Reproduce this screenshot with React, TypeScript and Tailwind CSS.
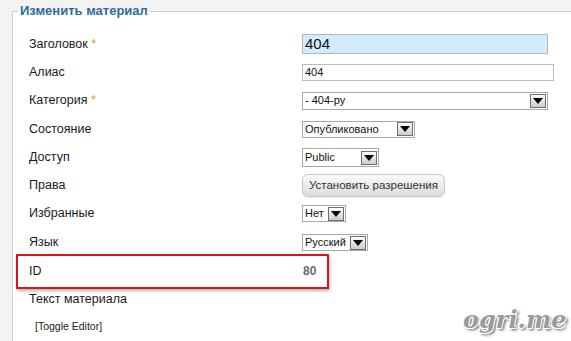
import React from "react"

const font = { fontFamily: '"Liberation Sans", Arial, sans-serif' }

function Arrow() {
  return (
    <div className="flex h-[14px] w-[16px] items-center justify-center border border-[#6f6f6f] bg-gradient-to-b from-[#fbfbfb] to-[#cdcdcd]">
      <svg width="10" height="6" viewBox="0 0 10 6">
        <path d="M0 0 H10 L5 6 Z" fill="#000" />
      </svg>
    </div>
  )
}

function Select({ w, h, text }: { w: string; h: string; text: string }) {
  return (
    <div className={`flex items-center justify-between border border-[#a9a9a9] bg-white pl-[2px] pr-[1px] ${w} ${h}`}>
      <span className="text-[11px] leading-none text-[#111]">{text}</span>
      <Arrow />
    </div>
  )
}

function Row({ h, label, req, children }: { h: string; label: string; req?: boolean; children?: React.ReactNode }) {
  return (
    <div className={`flex items-center ${h}`}>
      <div className="w-[273px] text-[12.5px] text-[#1a1a1a]">
        {label}
        {req && <span className="text-[#e8902a]"> *</span>}
      </div>
      {children}
    </div>
  )
}

export default function App() {
  return (
    <div className="relative h-[341px] w-[571px] overflow-hidden bg-[#f3f3f3] pl-[12px] pt-[3px]" style={font}>
      <fieldset className="w-[600px] border border-[#cfcfcf] bg-white px-[5px] pb-[40px]">
        <legend className="px-[2px] text-[13px] font-bold leading-[16px] text-[#2d6d9c]">Изменить материал</legend>
        <div className="pl-[11px] pt-[11px]">
          <Row h="h-[28px]" label="Заголовок" req>
            <div className="flex h-[20px] w-[246px] items-center border border-[#b0b8c0] bg-[#d3ebfd] pl-[2px] text-[15px] text-[#111]">404</div>
          </Row>
          <Row h="h-[28px]" label="Алиас">
            <div className="flex h-[17px] w-[252px] items-center border border-[#bcbcbc] bg-white pl-[2px] text-[11px] text-[#111]">404</div>
          </Row>
          <Row h="h-[29px]" label="Категория" req>
            <Select w="w-[246px]" h="h-[18px]" text="- 404-ру" />
          </Row>
          <Row h="h-[28px]" label="Состояние">
            <Select w="w-[113px]" h="h-[17px]" text="Опубликовано" />
          </Row>
          <Row h="h-[29px]" label="Доступ">
            <Select w="w-[77px]" h="h-[19px]" text="Public" />
          </Row>
          <Row h="h-[27px]" label="Права">
            <button className="h-[23px] w-[143px] rounded-[6px] border border-[#c8c8c8] bg-gradient-to-b from-[#fbfbfb] to-[#dcdcdc] pl-[6px] text-left text-[11.5px] text-[#333] shadow-[0_1px_1px_rgba(0,0,0,0.08)]">
              Установить разрешения
            </button>
          </Row>
          <Row h="h-[29px]" label="Избранные">
            <Select w="w-[44px]" h="h-[17px]" text="Нет" />
          </Row>
          <Row h="h-[29px]" label="Язык">
            <Select w="w-[66px]" h="h-[17px]" text="Русский" />
          </Row>
          <div className="relative">
            <Row h="h-[28px]" label="ID">
              <span className="pl-[1px] text-[12px] font-bold text-[#6a6a6a]">80</span>
            </Row>
            <div className="absolute left-[-13px] top-[-3px] h-[35px] w-[313px] border-[2.5px] border-[#d8151c] shadow-[1px_2px_3px_rgba(0,0,0,0.3)]" />
          </div>
          <Row h="h-[28px]" label="Текст материала" />
          <div className="flex h-[28px] items-center pl-[6px] text-[10.5px] text-[#222]">[Toggle Editor]</div>
        </div>
      </fieldset>
      <div
        className="absolute left-[463px] top-[302px] text-[24px] font-bold italic text-[#9b9b9b] [text-shadow:1px_1px_0_#fff,-1px_-1px_0_#fff,1px_-1px_0_#fff,-1px_1px_0_#fff,2px_2px_3px_#444]"
        style={{ fontFamily: '"DejaVu Serif", "Liberation Serif", serif' }}
      >
        ogri.me
      </div>
    </div>
  )
}
